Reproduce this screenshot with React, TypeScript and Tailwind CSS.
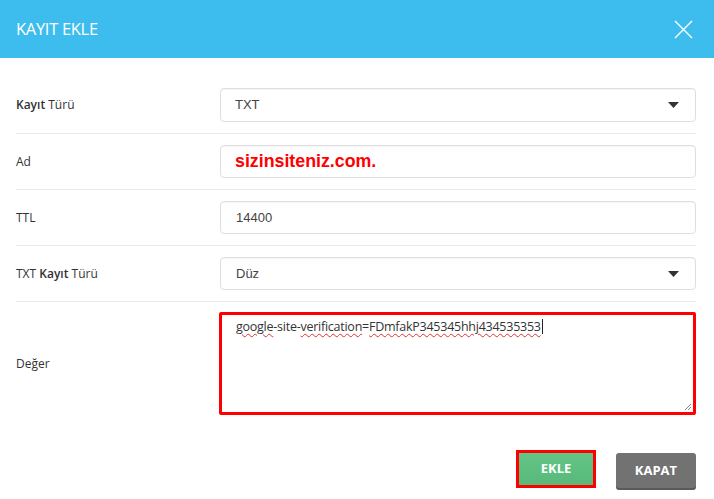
import React from "react";

function Row({ label, children, last }: { label: React.ReactNode; children: React.ReactNode; last?: boolean }) {
  return (
    <div className={"flex items-center py-[11px] " + (last ? "" : "border-b border-[#e9e9e9]")}>
      <div className="w-[204px] text-[12px] text-[#333] shrink-0">{label}</div>
      <div className="flex-1">{children}</div>
    </div>
  );
}

function Caret() {
  return (
    <svg width="11" height="6" viewBox="0 0 11 6" className="shrink-0">
      <path d="M0 0 H11 L5.5 6 Z" fill="#333" />
    </svg>
  );
}

export default function App() {
  const box =
    "h-[34px] w-full rounded-[4px] border border-[#dedede] bg-white flex items-center shadow-[inset_0_1px_1px_rgba(0,0,0,0.04)]";
  const valFont = { fontFamily: "'Liberation Sans', Arial, sans-serif" };
  return (
    <div
      className="w-[714px] h-[499px] bg-white overflow-hidden"
      style={{ fontFamily: "'Open Sans', 'Noto Sans', sans-serif" }}
    >
      <div className="h-[58px] bg-[#3dbdee] flex items-center justify-between pl-4 pr-[21px]">
        <div className="text-white text-[16.5px] tracking-[-0.3px]">KAYIT EKLE</div>
        <svg width="19" height="19" viewBox="0 0 19 19">
          <path d="M1 1 L18 18 M18 1 L1 18" stroke="white" strokeWidth="1.4" fill="none" />
        </svg>
      </div>
      <div className="pt-[19px] pl-4 pr-[18px]">
        <Row
          label={
            <>
              <span className="font-semibold">Kayıt</span> Türü
            </>
          }
        >
          <div className={box + " justify-between pl-[14px] pr-[16px]"}>
            <span className="text-[13px] text-[#444]" style={valFont}>TXT</span>
            <Caret />
          </div>
        </Row>
        <Row label="Ad">
          <div className={box + " pl-[14px] !h-[33px]"}>
            <span className="text-[17.8px] font-bold text-[#ff0000]" style={valFont}>sizinsiteniz.com.</span>
          </div>
        </Row>
        <Row label="TTL">
          <div className={box + " pl-[15px] !h-[33px]"}>
            <span className="text-[13px] text-[#444]" style={valFont}>14400</span>
          </div>
        </Row>
        <Row
          label={
            <>
              TXT <span className="font-semibold">Kayıt</span> Türü
            </>
          }
        >
          <div className={box + " justify-between pl-[15px] pr-[16px] !h-[33px]"}>
            <span className="text-[13px] text-[#444]" style={valFont}>Düz</span>
            <Caret />
          </div>
        </Row>
        <div className="flex items-center pt-[10px]">
          <div className="w-[203px] text-[12px] text-[#333] shrink-0">Değer</div>
          <div className="flex-1">
            <div className="relative h-[103px] w-full border-[3px] border-[#ff0000] rounded-[2px] bg-white pl-[14px] pt-[2px] leading-[16px]">
              <span className="text-[12.5px] text-[#333] tracking-[-0.25px]">
                <span className="underline decoration-wavy decoration-[#e03030] decoration-1 underline-offset-2">google</span>
                -site-
                <span className="underline decoration-wavy decoration-[#e03030] decoration-1 underline-offset-2">verification</span>
                =
                <span className="underline decoration-wavy decoration-[#e03030] decoration-1 underline-offset-2">FDmfakP345345hhj434535353</span>
              </span>
              <span className="inline-block w-px h-[15px] bg-[#222] align-middle ml-[1px]" />
              <svg width="8" height="8" viewBox="0 0 8 8" className="absolute right-[1px] bottom-[1px]">
                <path d="M7 1 L1 7 M7 4 L4 7" stroke="#888" strokeWidth="1" />
              </svg>
            </div>
          </div>
        </div>
        <div className="flex justify-end items-center gap-[20px] pt-[34px]">
          <div className="w-[80px] h-[38px] border-[3px] border-[#ff0000] bg-gradient-to-b from-[#62c486] to-[#58b97a] flex items-center justify-center">
            <span className="text-white font-bold text-[13px]">EKLE</span>
          </div>
          <div className="w-[80px] h-[35px] mt-[4px] rounded-[3px] bg-[#727272] shadow-[0_2px_0_#5a5a5a] flex items-center justify-center">
            <span className="text-white font-bold text-[13px]">KAPAT</span>
          </div>
        </div>
      </div>
    </div>
  );
}
